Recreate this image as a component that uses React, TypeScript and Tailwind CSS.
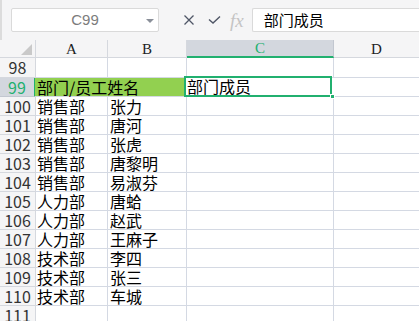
import React from "react";

const rows: [number, string, string][] = [
  [100, "销售部", "张力"],
  [101, "销售部", "唐河"],
  [102, "销售部", "张虎"],
  [103, "销售部", "唐黎明"],
  [104, "销售部", "易淑芬"],
  [105, "人力部", "唐蛤"],
  [106, "人力部", "赵武"],
  [107, "人力部", "王麻子"],
  [108, "技术部", "李四"],
  [109, "技术部", "张三"],
  [110, "技术部", "车城"],
  [111, "", ""],
];

const cjk = { fontFamily: '"Noto Sans CJK SC", "Liberation Sans", sans-serif' };
const serif = { fontFamily: '"Liberation Serif", "DejaVu Serif", serif' };

function Row({ n, a, b, h = "h-[19px]" }: { n: number; a: string; b: string; h?: string }) {
  return (
    <div className={`flex ${h}`}>
      <div className="w-[36px] shrink-0 bg-[#f5f5f6] border-r border-b border-[#d5d8de] text-center text-[16px] leading-[18px] text-[#333]" style={cjk}>
        {n}
      </div>
      <div className="w-[72px] shrink-0 border-r border-b border-[#d4d9e3] pl-[1px] text-[16px] leading-[18px] text-black whitespace-nowrap" style={cjk}>
        {a}
      </div>
      <div className="w-[79px] shrink-0 border-r border-b border-[#d4d9e3] pl-[2px] text-[16px] leading-[18px] text-black whitespace-nowrap" style={cjk}>
        {b}
      </div>
      <div className="w-[147px] shrink-0 border-r border-b border-[#d4d9e3]" />
      <div className="flex-1 border-b border-[#d4d9e3]" />
    </div>
  );
}

export default function App() {
  return (
    <div className="w-[419px] h-[321px] overflow-hidden bg-white">
      {/* formula bar */}
      <div className="h-[40px] bg-[#f5f5f6] border-l-2 border-[#dcdcdc] flex items-center">
        <div className="ml-[9px] w-[148px] h-[24px] bg-white border border-[#dadada] rounded-[2px] relative flex items-center justify-center">
          <span className="text-[15px] text-[#7c7c7c]" style={{ fontFamily: '"Liberation Sans", sans-serif' }}>C99</span>
          <span className="absolute right-[4px] top-[10px] w-0 h-0 border-l-[4px] border-r-[4px] border-t-[4px] border-l-transparent border-r-transparent border-t-[#8a8f99]" />
        </div>
        <svg className="ml-[24px]" width="12" height="12" viewBox="0 0 12 12">
          <path d="M1.5 1.5 L10.5 10.5 M10.5 1.5 L1.5 10.5" stroke="#4f5666" strokeWidth="1.3" fill="none" />
        </svg>
        <svg className="ml-[13px]" width="13" height="12" viewBox="0 0 13 12">
          <path d="M1 5.5 L5 9 L12 2.5" stroke="#4f5666" strokeWidth="1.4" fill="none" />
        </svg>
        <span className="ml-[9px] italic text-[19px] text-[#c4c4c4] leading-none" style={serif}>fx</span>
        <div className="ml-[8px] flex-1 h-[24px] bg-white border border-r-0 border-[#dadada] rounded-l-[2px] flex items-center pl-[11px]">
          <span className="text-[15px] text-black" style={cjk}>部门成员</span>
        </div>
      </div>

      {/* column header */}
      <div className="flex h-[18px] bg-[#f5f5f6]">
        <div className="w-[36px] shrink-0 border-r border-b border-[#d5d8de] flex items-end justify-end pr-[3px] pb-[2px]">
          <svg width="11" height="11" viewBox="0 0 11 11">
            <path d="M11 0 L11 11 L0 11 Z" fill="#c9c9c9" />
          </svg>
        </div>
        <div className="w-[72px] shrink-0 border-r border-b border-[#d5d8de] text-center text-[15px] leading-[18px] text-[#222]" style={serif}>A</div>
        <div className="w-[79px] shrink-0 border-r border-b border-[#d5d8de] text-center text-[15px] leading-[18px] text-[#222]" style={serif}>B</div>
        <div className="w-[147px] shrink-0 bg-[#d3d7de] border-r border-[#c2c7d0] border-b-2 border-b-[#21b06f] text-center text-[15px] leading-[17px] text-[#21b06f]" style={serif}>C</div>
        <div className="flex-1 border-b border-[#d5d8de] text-center text-[15px] leading-[18px] text-[#222]" style={serif}>D</div>
      </div>

      <Row n={98} a="" b="" h="h-[20px]" />

      {/* row 99 */}
      <div className="flex h-[19px]">
        <div className="w-[36px] shrink-0 bg-[#d3d7de] border-r-2 border-[#21b06f] border-b border-b-[#c2c7d0] text-center text-[16px] leading-[18px] text-[#21b06f]" style={cjk}>
          99
        </div>
        <div className="w-[150px] shrink-0 -ml-px bg-[#92d050] border-r border-b border-[#d4d9e3] pl-[2px] text-[16px] leading-[18px] text-black whitespace-nowrap" style={cjk}>
          部门/员工姓名
        </div>
        <div className="w-[147px] shrink-0 relative border-r border-b border-[#d4d9e3]">
          <div className="absolute -left-[1px] -top-[2px] w-[148px] h-[21px] border-2 border-[#21b06f] pl-[1px] text-[16px] leading-[16px] text-black whitespace-nowrap" style={cjk}>
            部门成员
          </div>
          <span className="absolute -right-[4px] -bottom-[3px] w-[5px] h-[5px] bg-[#21b06f] border border-white" />
        </div>
        <div className="flex-1 border-b border-[#d4d9e3]" />
      </div>

      {rows.map(([n, a, b]) => (
        <Row key={n} n={n} a={a} b={b} />
      ))}
    </div>
  );
}
